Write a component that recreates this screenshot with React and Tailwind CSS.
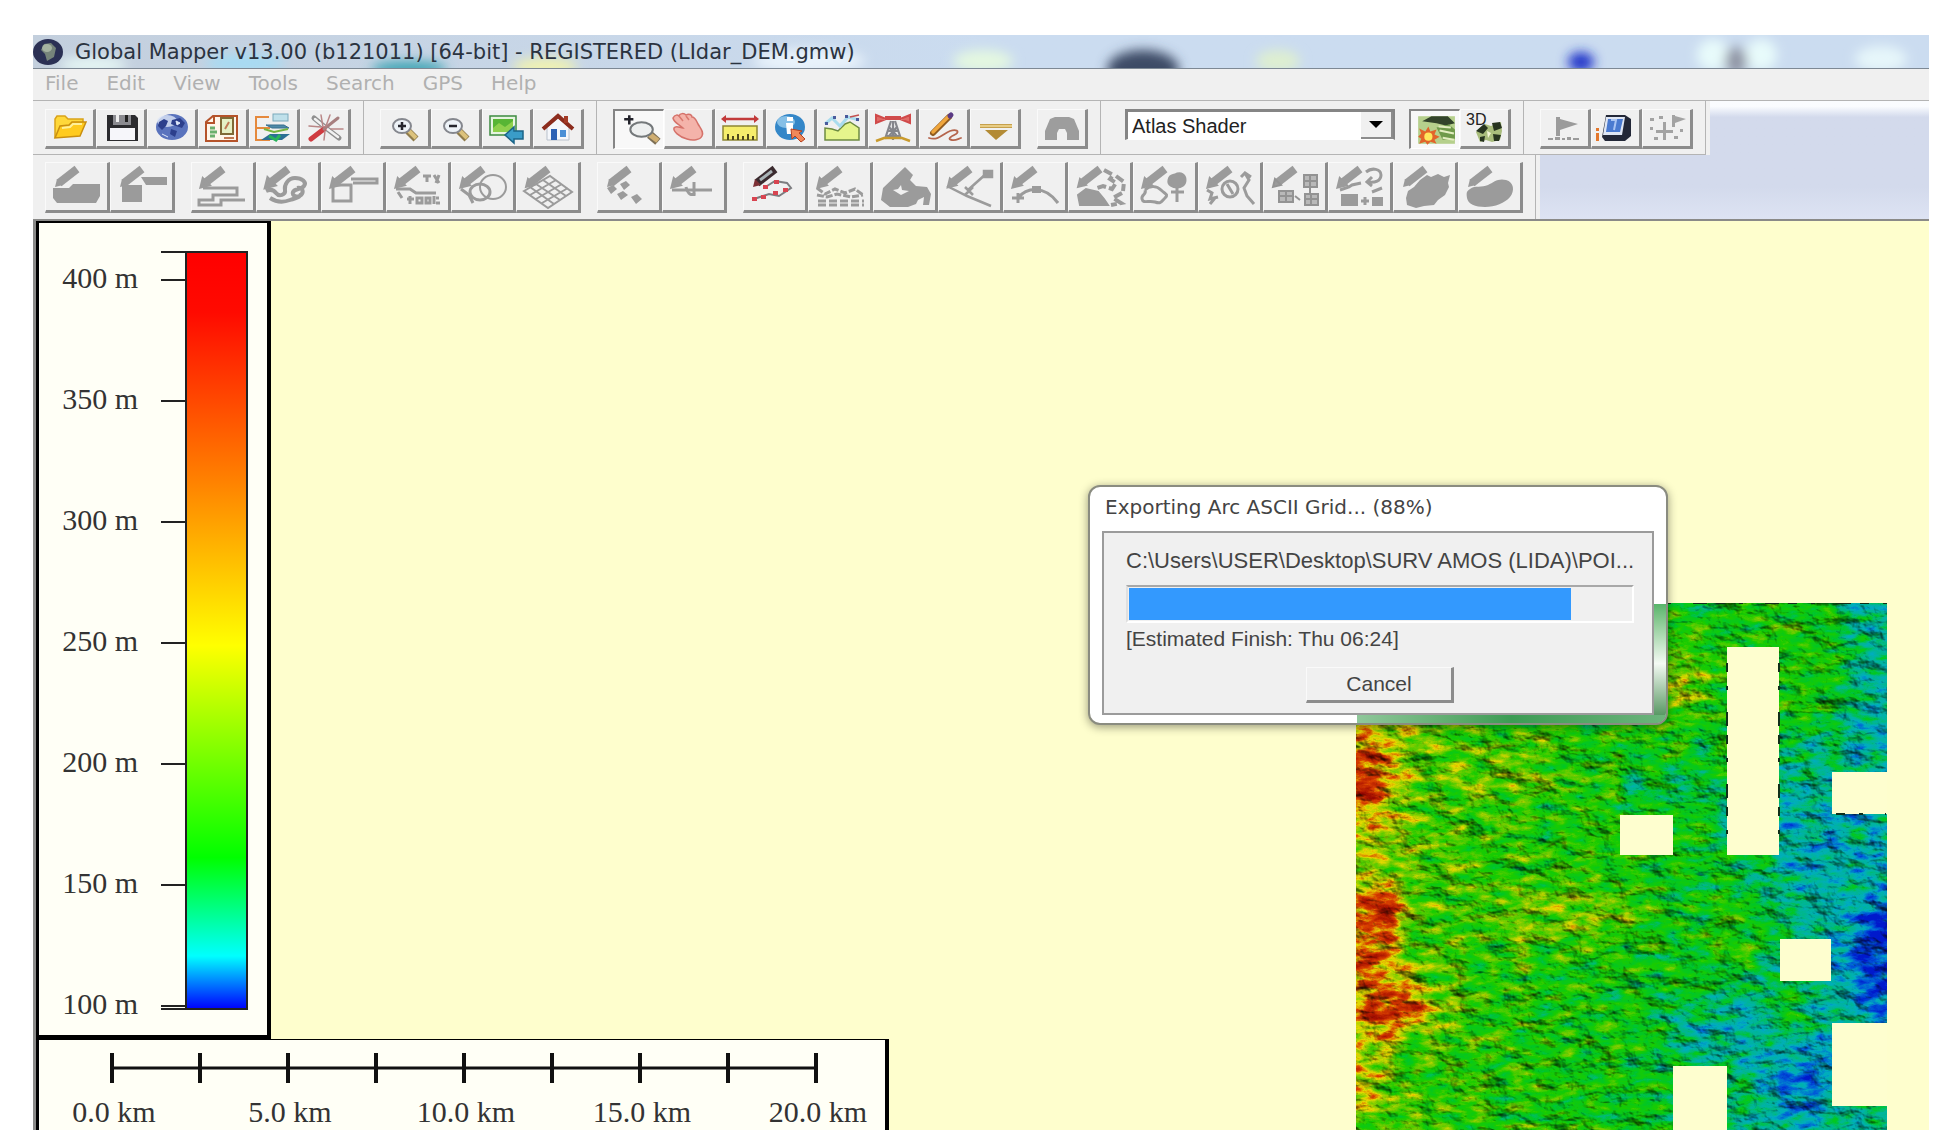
import clsx from "clsx";

const MENU = ["File", "Edit", "View", "Tools", "Search", "GPS", "Help"];

/* ---------- main toolbar icons, 51 x 40 ---------- */

const Folder = () => (
  <g>
    <path d="M10 29V10l2-3h8l3 3h15v6" fill="#ffd83a" stroke="#d9a21a" strokeWidth="1.5" />
    <path d="M10 29l5-12 9-1 3-3h14l-6 14z" fill="#ffcb1f" stroke="#c98f10" strokeWidth="1.5" />
    <path d="M17 19l8-1 3-3h9" fill="none" stroke="#fff09a" strokeWidth="2" />
  </g>
);

const Floppy = () => (
  <g>
    <path d="M11 6h28l3 3v23H11z" fill="#2b2b2e" />
    <rect x="17" y="6" width="18" height="10" fill="#8b8b90" />
    <rect x="20" y="6" width="3" height="7" fill="#eee" />
    <rect x="29" y="6" width="3" height="7" fill="#222" />
    <rect x="14" y="19" width="25" height="12" fill="#f6f6fa" />
  </g>
);

const Globe = () => (
  <g>
    <ellipse cx="25" cy="18" rx="16" ry="13" fill="#5a73bd" />
    <ellipse cx="20" cy="12" rx="10" ry="6" fill="#dfe7f8" opacity=".8" />
    <path d="M12 13l5-3 4 2-2 5-4 4-4-4zM25 11l8-2 5 5-3 5-6-2-5-2zM24 20l6 2-2 6-5-3z" fill="#2c3f8c" />
    <path d="M29 12l4 2-3 2zM15 25l6 3" stroke="#dfe8fa" fill="#dfe8fa" />
  </g>
);

const Catalog = () => (
  <g fill="none" strokeWidth="2">
    <path d="M8 32V13l7-6h24v25z" fill="#fff6ea" stroke="#b5532a" />
    <path d="M8 14h8V8" stroke="#b5532a" />
    <path d="M12 19h5M12 23h7M12 27h5" stroke="#6cb06c" strokeWidth="3" />
    <rect x="23" y="9" width="12" height="16" fill="#e5f0c4" stroke="#7f6a36" />
    <path d="M27 20l4-7M26 29h10" stroke="#c07a54" />
  </g>
);

const Layers = () => (
  <g fill="none">
    <path d="M20 8H7v23h14M7 19h14" stroke="#e5893c" strokeWidth="2" />
    <rect x="24" y="5" width="15" height="7" fill="#bfe0ea" stroke="#7ba9bb" />
    <path d="M17 16h18l5 3H23z" fill="#4f8aa8" stroke="#366f8e" />
    <path d="M15 20l10 3 14-3" stroke="#75b53f" strokeWidth="2" />
    <path d="M12 31l9-6h20l-8 6z" fill="#2c6f94" />
    <path d="M20 27l7 4 4-5" stroke="#28b45a" strokeWidth="3" />
  </g>
);

const Tools = () => (
  <g fill="none" strokeLinecap="round">
    <path d="M14 9l12 10 13 10" stroke="#8f8f8f" strokeWidth="5" />
    <path d="M15 10l11 9 12 9" stroke="#f2f2f2" strokeWidth="2.5" />
    <path d="M11 30l13-10" stroke="#cf3b40" strokeWidth="5" />
    <path d="M24 20L38 9" stroke="#a77f7f" strokeWidth="3" />
    <path d="M9 17l12 1M21 6l2 12M30 6l-4 11M43 20H31M24 31l1-9" stroke="#b98686" strokeWidth="1.5" />
  </g>
);

const Lens = ({ sign }) => (
  <g fill="none">
    <path d="M28 22l8 8" stroke="#8f7c4c" strokeWidth="7" />
    <path d="M28 21l8 8" stroke="#dcc27c" strokeWidth="4" />
    <ellipse cx="22" cy="17" rx="9" ry="7" fill="#eef3f8" stroke="#85878e" strokeWidth="2" />
    <path d={sign === "+" ? "M18 17h8M22 13v8" : "M18 17h8"} stroke="#26262e" strokeWidth="2.5" />
  </g>
);

const ZoomIn = () => <Lens sign="+" />;
const ZoomOut = () => <Lens sign="-" />;

const FullView = () => (
  <g>
    <rect x="8" y="7" width="26" height="19" fill="#e6f4e0" stroke="#3d8b40" strokeWidth="1.5" />
    <rect x="11" y="10" width="20" height="13" fill="#57b534" />
    <path d="M11 19l6-5 6 4 8-6v11H11z" fill="#8ed04c" />
    <path d="M23 26l9-8v4h9v8h-9v4z" fill="#3a9cc8" stroke="#1b6488" strokeWidth="1.5" />
  </g>
);

const House = () => (
  <g>
    <path d="M14 18v13h22V18l-11-9z" fill="#f5f7fb" stroke="#b9c1cc" />
    <path d="M10 20L25 7l15 13" fill="none" stroke="#8c2c1d" strokeWidth="4" />
    <rect x="31" y="7" width="4" height="7" fill="#a33a26" />
    <rect x="18" y="20" width="6" height="11" fill="#2d61b4" />
    <rect x="27" y="21" width="6" height="7" fill="#4a8fd6" />
  </g>
);

const ZoomTool = () => (
  <g fill="none">
    <path d="M10 9h9M15 5v9" stroke="#23232b" strokeWidth="2.5" />
    <path d="M35 24l8 7" stroke="#7d7056" strokeWidth="8" />
    <path d="M35 24l8 6" stroke="#cfae72" strokeWidth="5" />
    <ellipse cx="27" cy="19" rx="11" ry="7" fill="#eef0f0" stroke="#74787a" strokeWidth="2" />
  </g>
);

const Hand = () => (
  <g>
    <path
      d="M9 9c2-4 5-3 6-2 1-3 5-3 7-1 3-2 6 0 6 2 3 0 4 3 6 7 3 5 6 8 4 12-2 4-9 5-15 3-8-2-14-8-13-11 2-3 6 0 9 0-4-4-9-5-10-10z"
      fill="#f4b3aa"
      stroke="#d5726a"
      strokeWidth="1.5"
    />
    <path d="M15 7l4 5M22 7l3 4" stroke="#d97a70" strokeWidth="1.5" />
  </g>
);

const Ruler = () => (
  <g>
    <path d="M8 10h34" stroke="#c23a3a" strokeWidth="2.5" />
    <path d="M6 10l5-4v8zM44 10l-5-4v8z" fill="#c23a3a" />
    <rect x="8" y="17" width="34" height="14" fill="#f6ee6c" stroke="#8d8634" strokeWidth="1.5" />
    <path d="M13 31v-6M18 31v-4M23 31v-6M28 31v-4M33 31v-6M38 31v-4" stroke="#4f4a1e" strokeWidth="2" />
  </g>
);

const Info = () => (
  <g>
    <ellipse cx="24" cy="18" rx="15" ry="13" fill="#3487c8" />
    <ellipse cx="20" cy="13" rx="9" ry="6" fill="#a9d8f4" opacity=".7" />
    <path d="M21 8h6v4h-6zM20 14h7v11h-6z" fill="#fff" />
    <path d="M25 20l11 2-3 2 6 6-4 3-6-6-3 3z" fill="#f0885a" stroke="#b6401e" />
  </g>
);

const Profile = () => (
  <g>
    <path d="M8 31V19l7 1 6 2 7-7 5-2 9 6v12z" fill="#e5f58c" stroke="#6d8b42" strokeWidth="1.5" />
    <path d="M8 15l7-6 8 8 8-9 11 3" fill="none" stroke="#a9dcee" strokeWidth="3" />
    <path d="M16 7h3v3h-3zM28 6h3v3h-3zM39 9h3v3h-3zM8 13h3v3H8z" fill="#4a5b9c" />
    <path d="M33 8l9-2" stroke="#c25050" strokeWidth="1.5" />
  </g>
);

const Tower = () => (
  <g fill="none">
    <path d="M8 6l10 4-10 4zM42 6l-10 4 10 4z" fill="#e06a66" stroke="#d04a4a" strokeWidth="2" />
    <path d="M17 9h16" stroke="#d04a4a" strokeWidth="4" />
    <path d="M23 12l-6 18M27 12l6 18M25 12v19M20 22h10M19 27h12M21 18l8 9M29 18l-8 9" stroke="#85868c" strokeWidth="2.2" />
    <path d="M8 32l8-3h18l8 3" stroke="#c99a2c" strokeWidth="2.5" />
  </g>
);

const PencilTool = () => (
  <g fill="none" strokeLinecap="round">
    <path d="M14 24L30 8" stroke="#8f5a20" strokeWidth="6" />
    <path d="M14 23L29 8" stroke="#f0a63c" strokeWidth="3.5" />
    <path d="M31 7l1-1" stroke="#5a3a84" strokeWidth="5" />
    <path d="M10 29c9 3 14-4 21-7 6-2 10 0 6 3-6 3-9 5-4 6 3 1 6-1 9-2" stroke="#b5654d" strokeWidth="1.8" />
  </g>
);

const Flatten = () => (
  <g>
    <path d="M10 15h32v4H10z" fill="#c6a04c" />
    <path d="M10 17h32" stroke="#f3dd98" strokeWidth="1.5" />
    <path d="M15 21h23L26 31z" fill="#b38b35" />
  </g>
);

const Binoculars = () => (
  <path d="M8 31V22l5-12 5-2h14l5 2 5 12v9H30v-7l-2-4h-6l-2 4v7z" fill="#9d9d9d" />
);

const Shading = () => (
  <g>
    <rect x="8" y="6" width="36" height="27" fill="#b6d08c" />
    <path d="M12 11l9-5h16l7 7-9 2-9-2z" fill="#33442b" />
    <path d="M26 17l12-3 6 5v9l-12 1z" fill="#6f9a4a" />
    <path d="M29 20l14 3M28 16l12 1M32 27l11 2" stroke="#e3eec0" strokeWidth="2" />
    <path d="M18 16l2 5 6-2-2 5 5 2-5 3 2 4-6-2-3 3-2-3-6 2 2-5-3-2 3-3-2-5 6 3z" fill="#e2642a" />
    <circle cx="18" cy="26" r="4" fill="#ffe65c" />
  </g>
);

const View3D = () => (
  <g>
    <text x="6" y="16" fontSize="16" fontFamily="Liberation Sans, sans-serif" fill="#222">
      3D
    </text>
    <path d="M16 23l9-8 6 2 10-4 1 9-2 9-8 2-6-2-6 2z" fill="#a9bd7c" />
    <path d="M16 22l8-7 4 4-5 6zM32 14l8-1 2 6-8 3zM20 28l5-1-1 6-4-1zM33 25l8 1-2 6-5 0z" fill="#27341f" />
    <path d="M27 22l4 2-3 5z" fill="#f3f6d6" />
  </g>
);

const Flag = () => (
  <g fill="#9b9b9b">
    <path d="M16 8h4v19h-4zM20 10l18 5-18 6z" />
    <path d="M8 29h5v2H8zM15 28h5v3h-5zM22 29h3v2h-3zM27 28h4v3h-4zM33 29h6v2h-6z" />
  </g>
);

const Gps = () => (
  <g>
    <path d="M15 6h19l6 4v17l-6 5H14l-3-4z" fill="#232838" />
    <path d="M15 8h19l-3 18H12z" fill="#dfe6f4" />
    <path d="M17 10h15l-3 13H15z" fill="#4a7ad0" />
    <path d="M20 11h5l-2 10" fill="none" stroke="#a9c4f3" strokeWidth="2" />
    <path d="M5 19h3v3H5zM5 24h3v8H5z" fill="#e3772c" />
  </g>
);

const Waypoints = () => (
  <g fill="#a3a3a3">
    <path d="M30 6h3v12h-3zM33 7l11 3-11 4z" />
    <path d="M8 9h4v3H8zM17 7h4v3h-4zM8 18h3v3H8zM12 28h4v3h-4zM32 27h4v3h-4zM38 20h3v3h-3z" />
    <path d="M21 13h3v18h-3zM14 21h17v3H14z" />
  </g>
);

/* ---------- digitizer toolbar icons, 65 x 51 ---------- */

const Pen = ({ dark = false }) => (
  <g>
    <path d="M14 21L32 7" stroke={dark ? "#3a2a2e" : "#9b9b9b"} strokeWidth="8" />
    {dark && <path d="M17 18L29 9" stroke="#a9b3b6" strokeWidth="3" />}
    <path d="M10 25l2-8 6 6z" fill={dark ? "#7d3035" : "#9b9b9b"} />
  </g>
);

const AreaSolid = () => (
  <g>
    <Pen />
    <path d="M8 26h16l4-4h27v12l-4 7H12l-4-5z" fill="#9b9b9b" />
  </g>
);
const RectSolid = () => (
  <g fill="#9b9b9b">
    <Pen />
    <path d="M12 23h20v17H12zM31 15h26v8H36z" />
  </g>
);
const LineStep = () => (
  <g fill="none" stroke="#9b9b9b" strokeWidth="3">
    <Pen />
    <path d="M12 26h34v7H22v5H8v5h22v-5h24" />
  </g>
);
const Freehand = () => (
  <g fill="none" stroke="#9b9b9b" strokeWidth="4">
    <Pen />
    <path d="M10 29c4-2 7-2 10 2s10 2 9-3 3-12 10-12 12 4 9 8-9 2-11 6 5 6 8 3 2-8-4-7M14 36c6 4 12 5 20 2s9-2 11-6" />
  </g>
);
const RectOutline = () => (
  <g fill="none" stroke="#9b9b9b" strokeWidth="3">
    <Pen />
    <path d="M12 23h18v16H12zM30 17h26v4H32" />
  </g>
);
const Coords = () => (
  <g fill="none" stroke="#9b9b9b" strokeWidth="3">
    <Pen />
    <path d="M10 27h14l6 4h20M12 30l4 6M37 14h8M41 14v6M48 13l5 8M53 13l-3 8" />
    <path d="M21 37h7M24 34v8M31 36h5v5h-5zM40 36h4v5h-4zM48 34v8M53 36h-3M54 41h-4" />
  </g>
);
const RangeRing = () => (
  <g fill="none" stroke="#9b9b9b" strokeWidth="3">
    <Pen />
    <ellipse cx="42" cy="25" rx="13" ry="12" strokeWidth="2" />
    <ellipse cx="29" cy="30" rx="10" ry="8" />
    <path d="M10 27l8 6 4 8" />
  </g>
);
const Grid = () => (
  <g fill="none" stroke="#9b9b9b" strokeWidth="2">
    <Pen />
    <path d="M8 29l26-15 22 16-24 16zM14 33l26-15M20 37l26-15M26 41l26-15M14 25l24 17M20 22l24 16M27 18l23 16" />
  </g>
);
const Points = () => (
  <g fill="#9b9b9b">
    <Pen />
    <path d="M10 26l6-3 4 4-6 5zM23 22l6-3 4 4-6 5zM20 32l6-3 5 4-7 5zM34 35l6-3 5 5-6 5z" />
  </g>
);
const Perpendicular = () => (
  <g fill="none" stroke="#9b9b9b" strokeWidth="3">
    <Pen />
    <path d="M10 28h40" />
    <path d="M24 25c2 8 6 9 9 6M32 20v14" />
  </g>
);
const EditVertices = () => (
  <g>
    <Pen dark />
    <path d="M11 37l15-5 10 2 12-8-4-5-12-2-8 5" fill="none" stroke="#7d7d80" strokeWidth="2" />
    <path d="M9 35h5v4H9zM18 33h5v4h-5zM30 29h5v4h-5zM40 26h5v4h-5zM20 23h5v4h-5zM31 18h5v4h-5z" fill="#d84450" />
  </g>
);
const Simplify = () => (
  <g fill="none" stroke="#9b9b9b" strokeWidth="3">
    <Pen />
    <path d="M9 26l8 6 10-5 10 4 10-4 8 6M9 33l10 2 10-3 14 3 12-2" strokeDasharray="7 2" />
    <path d="M10 39h46M10 43h46" strokeDasharray="8 3" />
  </g>
);
const Merge = () => (
  <path
    d="M10 26L32 5l8 8-3 5 6 6 11 1 4 7-2 11h-6l1-8-6 3-2 4-8 3H17l-9-7zM20 28l8 5 8-4-7-1-1-5-3 4z"
    fill="#9b9b9b"
    fillRule="evenodd"
  />
);
const MovePoint = () => (
  <g fill="none" stroke="#9b9b9b" strokeWidth="2.5">
    <Pen />
    <path d="M9 24l20 10 24 10M30 28l19-17M27 25l8 8M35 25l-8 8" />
    <path d="M46 9h8v6h-8z" fill="#9b9b9b" />
  </g>
);
const Curve = () => (
  <g fill="none" stroke="#9b9b9b" strokeWidth="3">
    <Pen />
    <path d="M9 36h12M15 31v10M15 36c8-10 26-14 40 5" />
    <path d="M29 24h9v7h-9z" fill="#9b9b9b" stroke="none" />
  </g>
);
const CutAreas = () => (
  <g fill="#9b9b9b" stroke="#9b9b9b" strokeWidth="2">
    <Pen />
    <path d="M10 33l8-6 12 3 6 7 4 6H12z" />
    <path d="M36 8l9 5-3 4 6 4-4 6-9-3-6 2M48 14l8 6-1 9M54 31l-9 5 8 5-10 2" fill="none" strokeWidth="4" strokeDasharray="9 3" />
  </g>
);
const TreeArea = () => (
  <g fill="none" stroke="#9b9b9b" strokeWidth="3">
    <Pen />
    <path d="M42 13c6-3 10 0 10 5s-4 7-8 7-9-2-8-7 3-4 6-5z" fill="#9b9b9b" />
    <path d="M44 24v16M38 30h13M12 28c5-5 12-4 16 0s8 4 4 8-4 6-10 4-12 2-13-3 5-4 3-9" />
  </g>
);
const RotateArea = () => (
  <g fill="none" stroke="#9b9b9b" strokeWidth="3">
    <Pen />
    <ellipse cx="32" cy="27" rx="8" ry="8" />
    <path d="M29 22l6 10M9 28l5 3-2 6 8-2M12 42l5-6M47 11l4 7-5 8 3 8 7 8M43 15l4-4 6 4" />
  </g>
);
const CopyGrid = () => (
  <g fill="#b9b9b9" stroke="#939393" strokeWidth="2">
    <Pen />
    <path d="M41 13h13v12H41zM16 29h14v11H16zM42 32h13v11H42zM41 19h13M47 13v12M16 34h14M23 29v11M42 37h13M48 32v11M47 25v7M32 34l5 4" />
  </g>
);
const Transform = () => (
  <g fill="none" stroke="#9b9b9b" strokeWidth="3">
    <Pen />
    <path d="M38 10c6-5 15-3 15 3s-6 8-13 7M44 15l-5 5 5 4M12 28l9-3 3-2 9-2M44 30l10-4" />
    <path d="M13 32h17v12H13zM44 35h11v9H44z" fill="#9b9b9b" stroke="none" />
    <path d="M33 39h8M37 35v8" />
  </g>
);
const BlobRough = () => (
  <g fill="#9b9b9b">
    <Pen />
    <path d="M27 18l7-5 4 2 7-3 6 3 6-2-2 8 1 4-4 8-7 5-4 5-10 1-8 2-9-3-1-7 2-7 6-4z" />
  </g>
);
const BlobSmooth = () => (
  <g fill="#9b9b9b">
    <Pen />
    <path d="M12 27c5-4 12-1 18-4s10-7 18-5 9 11 4 17-15 10-25 10-17-3-18-9 0-7 3-9z" />
  </g>
);

const FILE_TOOLS = [
  ["Open", Folder],
  ["Save", Floppy],
  ["Online data", Globe],
  ["Map catalog", Catalog],
  ["Overlay control", Layers],
  ["Configure", Tools],
];
const VIEW_TOOLS = [
  ["Zoom in", ZoomIn],
  ["Zoom out", ZoomOut],
  ["Full view", FullView],
  ["Home", House],
];
const MODE_TOOLS = [
  ["Zoom tool", ZoomTool, true],
  ["Pan", Hand],
  ["Measure", Ruler],
  ["Feature info", Info],
  ["Path profile", Profile],
  ["View shed", Tower],
  ["Digitizer", PencilTool],
  ["Flatten", Flatten],
];
const SEARCH_TOOLS = [["Search", Binoculars]];
const SHADER_TOOLS = [
  ["Hill shading", Shading, true],
  ["3D view", View3D],
];
const GPS_TOOLS = [
  ["Mark waypoint", Flag],
  ["GPS info", Gps],
  ["Waypoints", Waypoints],
];

const AREA_TOOLS = [
  ["Area", AreaSolid],
  ["Rectangle area", RectSolid],
];
const LINE_TOOLS = [
  ["Line", LineStep],
  ["Freehand", Freehand],
  ["Rectangle", RectOutline],
  ["Coordinates", Coords],
  ["Range ring", RangeRing],
  ["Grid", Grid],
];
const POINT_TOOLS = [
  ["Points", Points],
  ["Perpendicular", Perpendicular],
];
const EDIT_TOOLS = [
  ["Edit vertices", EditVertices],
  ["Simplify", Simplify],
  ["Merge", Merge],
  ["Move point", MovePoint],
  ["Curve", Curve],
  ["Cut areas", CutAreas],
  ["Tree area", TreeArea],
  ["Rotate", RotateArea],
  ["Copy grid", CopyGrid],
  ["Transform", Transform],
  ["Rough area", BlobRough],
  ["Smooth area", BlobSmooth],
];

function ToolGroup({ tools, large = false }) {
  return (
    <div className="flex shrink-0">
      {tools.map(([label, Icon, pressed]) => (
        <button
          key={label}
          type="button"
          aria-label={label}
          aria-pressed={pressed}
          className={clsx(
            large ? "h-[51px] w-[65px]" : "h-10 w-[51px]",
            pressed
              ? "border-t-2 border-l-2 border-r border-b border-t-[#858585] border-l-[#858585] border-r-white border-b-white bg-[#f8f8f8]"
              : "border-t border-l border-r-3 border-b-3 border-t-[#fafafa] border-l-[#fafafa] border-r-[#8c8c8c] border-b-[#8c8c8c] bg-[#f0f0f0]"
          )}
        >
          <svg viewBox={large ? "1 1 61 47" : "1 1 47 36"} className="size-full">
            <Icon />
          </svg>
        </button>
      ))}
    </div>
  );
}

function TitleBar() {
  return (
    <header className="relative flex h-[34px] items-center gap-3 overflow-hidden border-b border-[#7d8894] bg-linear-to-r from-[#c3cfdd] to-[#cbdcf0] to-50%">
      <svg className="absolute inset-0 size-full" aria-hidden="true">
        <filter id="glass" x="-50%" y="-100%" width="200%" height="300%">
          <feGaussianBlur stdDeviation="6" />
        </filter>
        <g filter="url(#glass)">
          <ellipse cx="60" cy="30" rx="34" ry="8" fill="#e6f7f4" />
          <ellipse cx="212" cy="28" rx="40" ry="9" fill="#a5dcf4" />
          <ellipse cx="376" cy="34" rx="38" ry="8" fill="#3fa5b5" />
          <ellipse cx="512" cy="32" rx="32" ry="9" fill="#f1f3b0" />
          <ellipse cx="776" cy="26" rx="56" ry="12" fill="#e9f3fb" />
          <ellipse cx="950" cy="26" rx="30" ry="11" fill="#e4f8e0" />
          <ellipse cx="1110" cy="34" rx="36" ry="19" fill="#3d4c66" />
          <ellipse cx="1245" cy="26" rx="22" ry="11" fill="#deefd0" />
          <ellipse cx="1548" cy="27" rx="13" ry="10" fill="#1a32c8" />
          <ellipse cx="1680" cy="20" rx="16" ry="16" fill="#e8fbfb" />
          <ellipse cx="1728" cy="20" rx="16" ry="16" fill="#e8fbfb" />
          <ellipse cx="1703" cy="26" rx="11" ry="14" fill="#8f94a4" />
          <ellipse cx="1848" cy="24" rx="26" ry="13" fill="#e6f6fa" />
        </g>
      </svg>
      <svg viewBox="0 0 30 26" className="relative h-[26px] w-[30px] shrink-0" aria-hidden="true">
        <ellipse cx="15" cy="13" rx="15" ry="13" fill="#2b3054" />
        <path d="M11 5l7-1 5 5-2 9-7 4-2-7-4-4z" fill="#76847a" />
        <ellipse cx="14" cy="9" rx="5" ry="4" fill="#b9c6b0" opacity=".7" />
      </svg>
      <h1 className="relative text-[21px] leading-6 whitespace-nowrap text-[#2b3340]">
        Global Mapper v13.00 (b121011) [64-bit] - REGISTERED (LIdar_DEM.gmw)
      </h1>
    </header>
  );
}

const LEGEND_TICKS = [400, 350, 300, 250, 200, 150, 100];

function Legend() {
  return (
    <svg className="block h-[818px] w-[235px] border-t-2 border-r-4 border-b-4 border-l-3 border-black bg-[#fffff6]">
      <defs>
        <linearGradient id="atlas" x1="0" x2="0" y1="0" y2="1">
          <stop offset="0" stopColor="#ff0000" />
          <stop offset=".08" stopColor="#ff0a00" />
          <stop offset=".3" stopColor="#ff8000" />
          <stop offset=".52" stopColor="#ffff00" />
          <stop offset=".8" stopColor="#00ff00" />
          <stop offset=".93" stopColor="#00ffff" />
          <stop offset="1" stopColor="#0000ff" />
        </linearGradient>
      </defs>
      <rect x="147" y="29" width="61" height="757" fill="url(#atlas)" stroke="#222" strokeWidth="2" />
      <path d="M122 29h26M122 786h26" stroke="#222" strokeWidth="2" />
      {LEGEND_TICKS.map((value, i) => (
        <g key={value}>
          <text x="99" y={65 + i * 121} textAnchor="end" fontSize="30" fill="#333">
            {value} m
          </text>
          <path d={`M122 ${57 + i * 121}h26`} stroke="#222" strokeWidth="2" />
        </g>
      ))}
    </svg>
  );
}

const KM_LABELS = ["0.0 km", "5.0 km", "10.0 km", "15.0 km", "20.0 km"];

function ScaleBar() {
  return (
    <svg className="block w-[853px] flex-1 border-t border-r-4 border-l-3 border-black bg-[#fffff6]">
      <path d="M73 28h704" stroke="#111" strokeWidth="3" />
      {Array.from({ length: 9 }, (_, i) => (
        <path key={i} d={`M${73 + i * 88} 13v30`} stroke="#111" strokeWidth="4" />
      ))}
      {KM_LABELS.map((label, i) => (
        <text key={label} x={75 + i * 176} y="82" textAnchor="middle" fontSize="30" fill="#333">
          {label}
        </text>
      ))}
    </svg>
  );
}

// Grey levels are heights; the filter adds relief and maps them to the atlas colours.
function Terrain() {
  return (
    <svg className="absolute top-[382px] right-[42px] bottom-0 h-[527px] w-[531px]" role="img" aria-label="Lidar elevation model">
      <defs>
        <linearGradient id="slope" x1="0" x2="1" y1="0" y2=".2">
          <stop offset="0" stopColor="#949494" />
          <stop offset=".35" stopColor="#848484" />
          <stop offset=".7" stopColor="#707070" />
          <stop offset="1" stopColor="#444444" />
        </linearGradient>
        <filter id="soft" x="-50%" y="-50%" width="200%" height="200%">
          <feGaussianBlur stdDeviation="13" />
        </filter>
        <filter id="relief" x="0" y="0" width="100%" height="100%" colorInterpolationFilters="sRGB">
          <feTurbulence type="fractalNoise" baseFrequency=".045 .1" numOctaves="6" seed="11" result="noise" />
          <feColorMatrix in="noise" values="1 0 0 0 0  1 0 0 0 0  1 0 0 0 0  0 0 0 0 1" result="grey" />
          <feComposite in="SourceGraphic" in2="grey" operator="arithmetic" k2="1" k3=".5" k4="-.25" result="height" />
          <feComponentTransfer in="height" result="colour">
            <feFuncR type="table" tableValues="0 0 0 0 0 .1 .45 .9 .85 .7 .55" />
            <feFuncG type="table" tableValues=".1 .35 .68 .72 .78 .8 .8 .85 .25 .1 0" />
            <feFuncB type="table" tableValues=".8 .85 .75 .55 .15 0 0 0 0 0 0" />
            <feFuncA type="linear" slope="0" intercept="1" />
          </feComponentTransfer>
          <feTurbulence type="fractalNoise" baseFrequency=".03 .05" numOctaves="6" seed="4" result="bumps" />
          <feColorMatrix in="bumps" values="0 0 0 0 0  0 0 0 0 0  0 0 0 0 0  1 0 0 0 0" result="alpha" />
          <feDiffuseLighting in="alpha" surfaceScale="6" diffuseConstant="1.3" lightingColor="#fff" result="light">
            <feDistantLight azimuth="315" elevation="52" />
          </feDiffuseLighting>
          <feBlend in="colour" in2="light" mode="multiply" />
        </filter>
      </defs>
      <g filter="url(#relief)">
        <rect width="531" height="527" fill="url(#slope)" />
        <g filter="url(#soft)">
          <ellipse cx="20" cy="134" rx="46" ry="24" fill="#b0b0b0" />
          <ellipse cx="8" cy="180" rx="30" ry="34" fill="#dadada" />
          <ellipse cx="20" cy="240" rx="36" ry="30" fill="#a8a8a8" />
          <ellipse cx="18" cy="305" rx="32" ry="24" fill="#dcdcdc" />
          <ellipse cx="12" cy="355" rx="38" ry="20" fill="#d8d8d8" />
          <ellipse cx="34" cy="405" rx="46" ry="24" fill="#dadada" />
          <ellipse cx="4" cy="470" rx="18" ry="40" fill="#c0c0c0" />
          <ellipse cx="325" cy="80" rx="24" ry="40" fill="#a0a0a0" />
          <ellipse cx="210" cy="310" rx="80" ry="30" fill="#969696" />
          <ellipse cx="140" cy="170" rx="60" ry="24" fill="#949494" />
          <ellipse cx="430" cy="60" rx="60" ry="70" fill="#7a7a7a" />
          <ellipse cx="330" cy="185" rx="70" ry="14" fill="#5c5c5c" />
          <ellipse cx="470" cy="240" rx="50" ry="70" fill="#3c3c3c" />
          <ellipse cx="370" cy="330" rx="44" ry="40" fill="#7a7a7a" />
          <ellipse cx="380" cy="430" rx="70" ry="30" fill="#444444" />
          <ellipse cx="524" cy="350" rx="26" ry="60" fill="#060606" />
          <ellipse cx="450" cy="470" rx="50" ry="44" fill="#2c2c2c" />
          <ellipse cx="434" cy="405" rx="14" ry="36" fill="#747474" />
          <ellipse cx="500" cy="524" rx="30" ry="14" fill="#5c5c5c" />
        </g>
      </g>
      <g fill="#fefecf">
        <rect x="371" y="44" width="52" height="208" />
        <rect x="264" y="212" width="53" height="40" />
        <rect x="476" y="169" width="55" height="42" />
        <rect x="424" y="336" width="51" height="42" />
        <rect x="476" y="420" width="55" height="83" />
        <rect x="317" y="463" width="54" height="64" />
      </g>
      <path d="M423 60v180M371 60v190M0 0h531M480 211h50" fill="none" stroke="#10301a" strokeWidth="2" strokeDasharray="9 14 4 22 14 9" />
    </svg>
  );
}

function ExportDialog() {
  return (
    <section
      role="dialog"
      aria-labelledby="export-title"
      className="absolute top-[264px] right-[261px] w-[580px] overflow-hidden rounded-xl border-2 border-[#8a8c80] bg-white px-3 pb-2 font-['DejaVu_Sans',sans-serif] shadow-[0_2px_10px_rgba(0,0,0,0.4)]"
    >
      <div className="absolute top-[117px] right-0 bottom-0 w-3 bg-linear-to-b from-[#57b56a] via-[#f4faf4] to-[#3f8a50]" />
      <div className="absolute right-0 bottom-0 left-[267px] h-2 bg-linear-to-r from-[#8fc79a] via-[#3c9c54] to-[#6cb47c]" />
      <h2 id="export-title" className="pt-2 pb-3 pl-[3px] text-[20px] leading-6 text-[#444]">
        Exporting Arc ASCII Grid... (88%)
      </h2>
      <div className="relative flex h-[184px] flex-col border-2 border-[#9b9b9b] bg-[#f0f0f0] pt-4 pr-[18px] pl-[22px] font-['Liberation_Sans',Arial,sans-serif] text-[21px] leading-6 text-[#444]">
        <p className="text-[22px] leading-6 whitespace-nowrap">C:\Users\USER\Desktop\SURV AMOS (LIDA)\POI...</p>
        <div
          role="progressbar"
          aria-label="Export progress"
          aria-valuenow={88}
          aria-valuemin={0}
          aria-valuemax={100}
          className="mt-3 h-[38px] border-2 border-t-[#a8a8a8] border-r-white border-b-white border-l-[#e0e0e0] p-px"
        >
          <div className="h-full bg-[#3399fe]" style={{ width: "88%" }} />
        </div>
        <p className="mt-1">[Estimated Finish: Thu 06:24]</p>
        <button
          type="button"
          className="mt-4 h-9 w-[148px] self-center border-t border-r-3 border-b-3 border-l border-t-[#fafafa] border-r-[#8c8c8c] border-b-[#8c8c8c] border-l-[#fafafa]"
        >
          Cancel
        </button>
      </div>
    </section>
  );
}

export default function App() {
  return (
    <div className="h-screen overflow-hidden bg-white pt-[35px] pr-1 pl-[33px] font-['DejaVu_Sans',sans-serif]">
      <div className="flex h-full flex-col bg-[#f0f0f0]">
        <TitleBar />

        <nav className="flex h-8 items-center gap-7 border-b border-[#b4b4b4] px-3 pb-1 text-[20px] leading-6 text-[#b0b0b0]">
          {MENU.map((item) => (
            <button key={item} type="button">
              {item}
            </button>
          ))}
        </nav>

        <div className="flex h-[54px] shrink-0">
          <div className="flex border-b border-[#b4b4b4]">
            <div className="flex border-r border-[#b4b4b4] px-3 pt-2">
              <ToolGroup tools={FILE_TOOLS} />
            </div>
            <div className="flex border-r border-[#b4b4b4] pt-2 pr-3 pl-4">
              <ToolGroup tools={VIEW_TOOLS} />
            </div>
            <div className="flex gap-4 border-r border-[#b4b4b4] pt-2 pr-3 pl-4">
              <ToolGroup tools={MODE_TOOLS} />
              <ToolGroup tools={SEARCH_TOOLS} />
            </div>
            <div className="flex gap-[14px] border-r border-[#b4b4b4] pt-2 pr-3 pl-6">
              <div className="relative h-[31px] w-[270px] border-t-3 border-r-2 border-b border-l-3 border-t-[#858585] border-r-[#858585] border-b-white border-l-[#858585] bg-white">
                <select
                  aria-label="Shader"
                  className="size-full appearance-none bg-transparent px-1 font-['Liberation_Sans',Arial,sans-serif] text-[20px] leading-6 text-[#222]"
                >
                  <option>Atlas Shader</option>
                </select>
                <span className="pointer-events-none absolute inset-y-0 right-0 flex w-8 items-center justify-center border-r-2 border-b-2 border-[#8c8c8c] bg-[#f0f0f0]">
                  <svg viewBox="0 0 14 7" className="h-[7px] w-[14px]">
                    <path d="M0 0h14L7 7z" />
                  </svg>
                </span>
              </div>
              <ToolGroup tools={SHADER_TOOLS} />
            </div>
            <div className="flex border-r border-[#b4b4b4] pt-2 pr-3 pl-4">
              <ToolGroup tools={GPS_TOOLS} />
            </div>
          </div>
          <div className="ml-1 flex-1 bg-linear-to-b from-[#fafcff] from-10% via-[#d3daec] via-30% to-[#d3daec]" />
        </div>

        <div className="flex h-16 shrink-0">
          <div className="flex gap-4 border-r border-[#b4b4b4] px-3 pt-[7px]">
            <ToolGroup large tools={AREA_TOOLS} />
            <ToolGroup large tools={LINE_TOOLS} />
            <ToolGroup large tools={POINT_TOOLS} />
            <ToolGroup large tools={EDIT_TOOLS} />
          </div>
          <div className="ml-1 flex-1 bg-linear-to-b from-[#d3daec] from-50% to-[#dde3f3]" />
        </div>

        <main className="relative flex min-h-0 flex-1 flex-col overflow-hidden border-t-2 border-l-3 border-[#8a8a88] bg-[#fefecd] font-['Liberation_Serif','Times_New_Roman',serif]">
          <Legend />
          <ScaleBar />
          <Terrain />
          <ExportDialog />
        </main>
      </div>
    </div>
  );
}
